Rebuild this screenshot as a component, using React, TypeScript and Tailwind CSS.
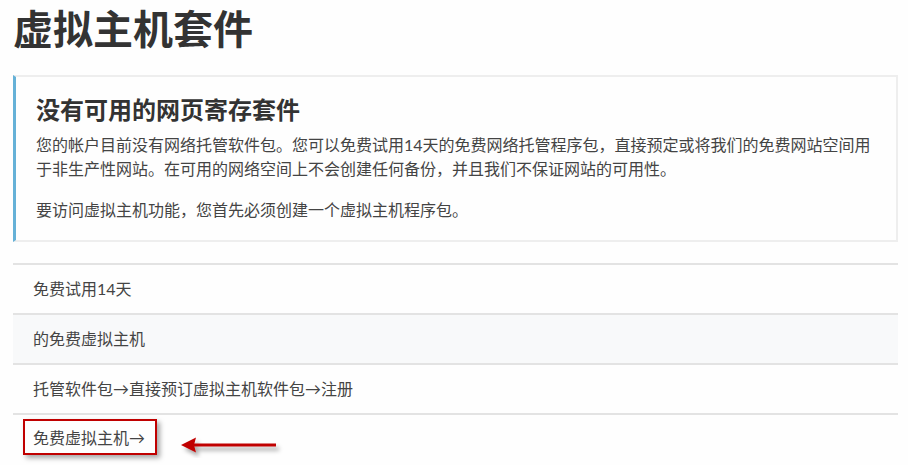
import React from "react";

const rows = ["免费试用14天", "的免费虚拟主机", "托管软件包→直接预订虚拟主机软件包→注册"];

export default function App() {
  return (
    <div className="w-[908px] h-[465px] overflow-hidden bg-[#fefefe] pl-[13px] pr-[10px] pt-[7px] font-['Lato','Noto_Sans_CJK_SC',sans-serif] text-[#444]">
      <h1 className="text-[40px] leading-[44px] font-bold text-[#333]">虚拟主机套件</h1>

      {/* Notice box */}
      <div className="mt-[24px] border-2 border-[#eeeeee] border-l-[3px] border-l-[#65b1d7] pl-[20px] pr-[16px] pt-[20px] pb-[18px]">
        <h2 className="text-[24px] leading-[26px] font-bold text-[#333]">没有可用的网页寄存套件</h2>
        <p className="mt-[10px] text-[16px] leading-[24px]">
          您的帐户目前没有网络托管软件包。您可以免费试用14天的免费网络托管程序包，直接预定或将我们的免费网站空间用于非生产性网站。在可用的网络空间上不会创建任何备份，并且我们不保证网站的可用性。
        </p>
        <p className="mt-[17px] text-[16px] leading-[24px]">要访问虚拟主机功能，您首先必须创建一个虚拟主机程序包。</p>
      </div>

      {/* Steps list */}
      <div className="mt-[21px] text-[16px] leading-[24px]">
        {rows.map((row, i) => (
          <div
            key={i}
            className={`h-[50px] border-t-2 border-[#e3e3e3] flex items-center pl-[20px] ${
              i === 1 ? "bg-[#f8f9fa]" : ""
            }`}
          >
            {row}
          </div>
        ))}
        <div className="h-[50px] border-t-2 border-[#e3e3e3] flex items-start pl-[10px] pt-[4px]">
          <span className="border-2 border-[#c00000] pl-[8px] pr-[10px] pt-[5px] pb-[3px] shadow-[3px_3px_5px_rgba(0,0,0,0.35)]">
            免费虚拟主机→
          </span>
          <svg className="ml-[24px] mt-[15px]" width="104" height="24" viewBox="0 0 104 24">
            <defs>
              <filter id="sh" x="-10%" y="-50%" width="130%" height="200%">
                <feDropShadow dx="3" dy="4" stdDeviation="2" floodColor="#000" floodOpacity="0.35" />
              </filter>
            </defs>
            <g filter="url(#sh)">
              <rect x="13" y="9.5" width="82" height="3" fill="#c00000" />
              <polygon points="0,11 15,3.5 13,11 15,18.5" fill="#c00000" />
            </g>
          </svg>
        </div>
      </div>
    </div>
  );
}
